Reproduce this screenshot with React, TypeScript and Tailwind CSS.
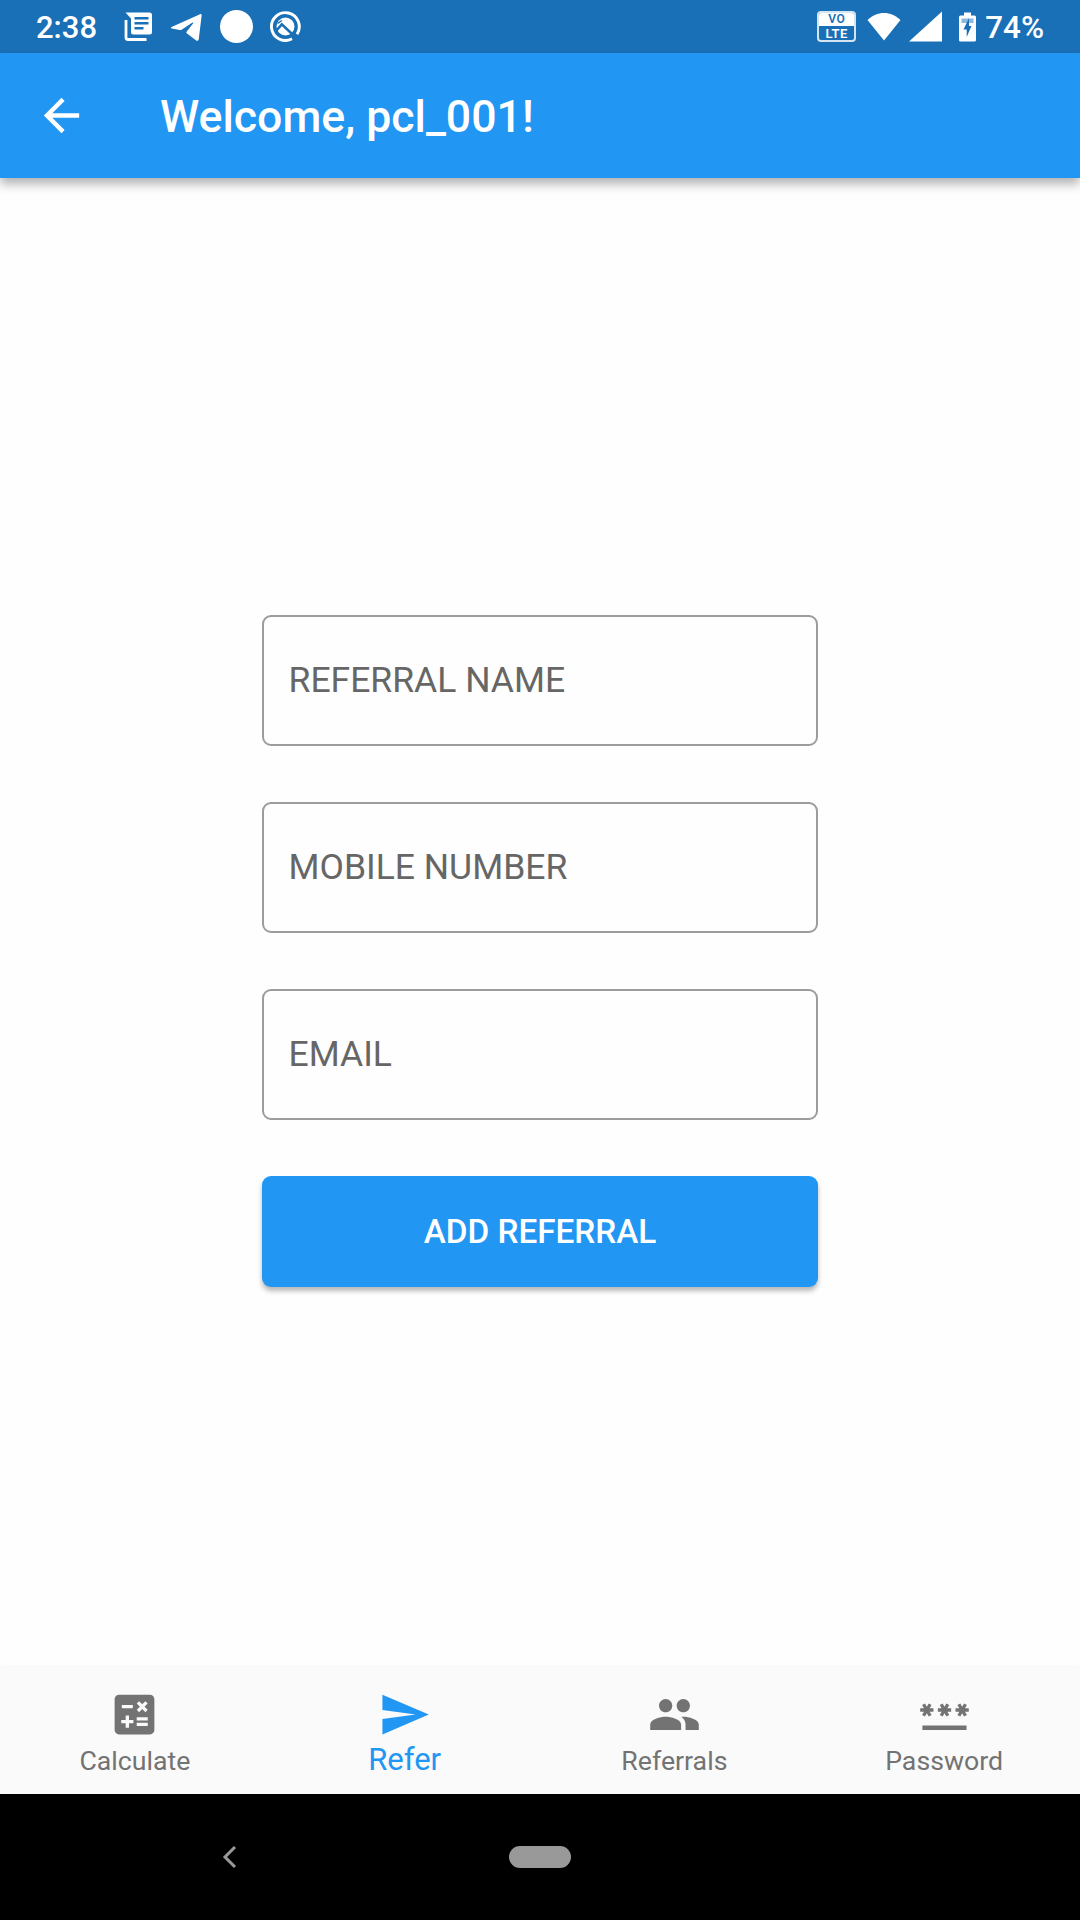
import { MdArrowBack, MdCalculate, MdSend, MdPeople, MdPassword } from "react-icons/md";

const fields = ["REFERRAL NAME", "MOBILE NUMBER", "EMAIL"];

const tabs = [
  { label: "Calculate", Icon: MdCalculate, active: false },
  { label: "Refer", Icon: MdSend, active: true },
  { label: "Referrals", Icon: MdPeople, active: false },
  { label: "Password", Icon: MdPassword, active: false },
];

function StatusBar() {
  return (
    <div className="flex h-[53px] shrink-0 items-center justify-between bg-[#1a70b7] pr-[36px] pl-[36px] text-white">
      <div className="flex items-center">
        <span className="w-[88px] pt-px text-[31px] leading-[53px] font-medium">2:38</span>
        <svg className="h-[30px] w-[30px]" viewBox="0 0 30 30" fill="white">
          <path d="M2 8V25.500a2 2 0 0 0 2 2H22.500" fill="none" stroke="white" strokeWidth="2.800" />
          <path
            fillRule="evenodd"
            d="M1.500 0.500H25.500a2.500 2.500 0 0 1 2.500 2.500V20a2.500 2.500 0 0 1-2.500 2.500H9.500a2.500 2.500 0 0 1-2.500-2.500V6.500ZM10.500 5V7.500H24.500V5ZM10.500 10V12.500H24.500V10ZM10.500 15V17.500H19.500V15Z"
          />
        </svg>
        <svg className="ml-[16px] h-[30px] w-[33px]" viewBox="0 0 33 30" fill="white">
          <path d="M1.500 15 29.500 2.400c1.500-.7 2.300 0 2.100 1.300L28.800 27c-.3 1.800-1.500 2.200-2.900 1.200L17 21.500c-.8-.7-.8-1.300-.2-2L23 11.500c.6-.9 0-1.300-.9-.7L12 17.600c-.8.5-1.500.6-2.400.4L1.800 16.600c-1.200-.3-1.200-1.200-.3-1.600Z" />
        </svg>
        <div className="ml-[17px] size-[33px] rounded-full bg-white" />
        <svg className="ml-[17px] size-[31px]" viewBox="0 0 31 31" fill="none">
          <path d="M22 27.800a13.900 13.900 0 1 1 5-4.600" stroke="white" strokeWidth="2.900" />
          <circle cx="15.500" cy="15.500" r="9" fill="white" />
          <path d="M6 20 11.800 13.300 28.500 29" stroke="#1a70b7" strokeWidth="2.600" />
          <path d="M7.500 12.500 11.800 9.500" stroke="#1a70b7" strokeWidth="1.500" />
        </svg>
      </div>
      <div className="flex items-center">
        <div className="flex h-[31px] w-[39px] flex-col overflow-hidden rounded-[4px] border-2 border-[#d5e4f2] text-center leading-[13px] font-semibold">
          <span className="h-[13px] bg-white text-[12px] leading-[13px] tracking-[0.5px] text-[#1a70b7]">VO</span>
          <span className="h-[14px] text-[13px] leading-[15px] tracking-[0.5px]">LTE</span>
        </div>
        <svg className="ml-[11px] h-[29px] w-[34px]" viewBox="0 0 34 29" fill="white">
          <path d="M0.500 8C10-1.500 24-1.500 33.500 8L17 28.500Z" />
        </svg>
        <svg className="ml-[8px] h-[31px] w-[33px]" viewBox="0 0 33 31" fill="white">
          <path d="M33 0.500V30.500H0Z" />
        </svg>
        <svg className="ml-[17px] h-[30px] w-[17px]" viewBox="0 0 17 30">
          <path d="M5 0.500h7v3h3.500A1.500 1.500 0 0 1 17 5V28a1.500 1.500 0 0 1-1.500 1.500H1.500A1.500 1.500 0 0 1 0 28V5A1.500 1.500 0 0 1 1.500 3.500H5Z" fill="white" />
          <path d="M2.500 6.500h12v4.500h-12Z" fill="#8db9dd" />
          <path d="M10 6 4.500 17.500H7.700V25L12.500 14H10Z" fill="#1a70b7" />
        </svg>
        <span className="ml-[9px] pt-px text-[31.400px] leading-[53px] font-medium">74%</span>
      </div>
    </div>
  );
}

export default function App() {
  return (
    <div className="flex h-[1920px] w-[1080px] flex-col bg-white font-['Roboto',sans-serif]">
      <StatusBar />
      <header className="relative z-10 flex h-[124.500px] shrink-0 items-center bg-[#2196f3] pl-[35px] text-white shadow-[0_6px_10px_rgba(0,0,0,0.3)]">
        <MdArrowBack className="size-[53px]" />
        <h1 className="ml-[72px] pt-[4px] text-[44.600px] leading-[52px] font-medium whitespace-nowrap">Welcome, pcl_001!</h1>
      </header>
      <main className="flex flex-1 flex-col items-center bg-[#fefefe] pt-[437.500px]">
        <form className="flex w-[556px] flex-col">
          {fields.map((name) => (
            <input
              key={name}
              aria-label={name}
              placeholder={name}
              className="mb-[56px] h-[131px] w-full rounded-[9px] border-2 border-[#9c9c9c] px-[24.500px] pb-[2px] text-[35.500px] text-[#666] placeholder:text-[#666]"
            />
          ))}
          <button
            type="button"
            className="h-[111px] w-full rounded-[9px] bg-[#2196f3] text-[33.300px] font-medium text-white shadow-[0_4px_5px_rgba(0,0,0,0.28)]"
          >
            ADD REFERRAL
          </button>
        </form>
      </main>
      <nav className="relative grid h-[127px] shrink-0 grid-cols-4 bg-[#fafafa] pr-px shadow-[0_0_4px_rgba(0,0,0,0.06)]">
        {tabs.map(({ label, Icon, active }) => (
          <div key={label} className={active ? "flex flex-col items-center pt-[21px] text-[#2196f3]" : "flex flex-col items-center pt-[21px] text-[#737373]"}>
            <Icon className="size-[53px]" />
            <span className={active ? "text-[31px] leading-[38px]" : "pt-[2px] text-[26.700px] leading-[36px]"}>{label}</span>
          </div>
        ))}
      </nav>
      <div className="flex h-[126px] shrink-0 items-center bg-black pl-[222px]">
        <svg className="h-[24px] w-[15px]" viewBox="0 0 15 24" fill="none" stroke="#999" strokeWidth="3">
          <path d="M13 2 3 12 13 22" />
        </svg>
        <div className="ml-[272px] h-[22px] w-[62px] rounded-full bg-[#999]" />
      </div>
    </div>
  );
}
